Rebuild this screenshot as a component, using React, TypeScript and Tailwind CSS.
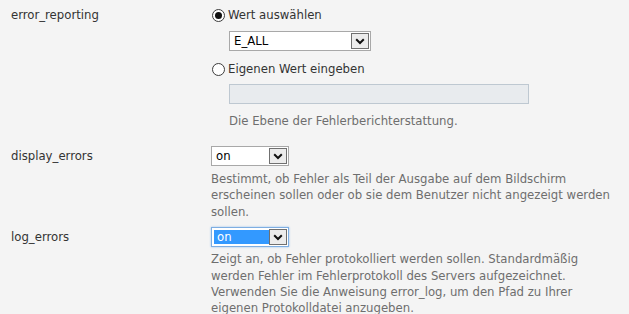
function Chevron() {
  return (
    <svg width="10" height="7" viewBox="0 0 10 7" className="block">
      <path d="M1.2 1.3 L5 5 L8.8 1.3" fill="none" stroke="#111" strokeWidth="2" />
    </svg>
  );
}

function FakeSelect({ value, width, focused }: { value: string; width: string; focused?: boolean }) {
  return (
    <div
      className={
        "flex h-[20px] items-stretch bg-white p-px " +
        width +
        (focused ? " border border-[#7eaee2] shadow-[0_0_2px_#9cc4ee]" : " border border-[#a8a8a8]")
      }
    >
      <div
        className={
          "flex flex-1 items-center pl-[3px] " + (focused ? "my-px ml-px bg-[#3399ff] text-white" : "text-black")
        }
      >
        {value}
      </div>
      <div className="flex w-[18px] items-center justify-center border border-[#707070] bg-[#ececec]">
        <Chevron />
      </div>
    </div>
  );
}

function Radio({ checked }: { checked?: boolean }) {
  return (
    <span className="flex h-[13px] w-[13px] items-center justify-center rounded-full border border-[#3c3c3c] bg-white">
      {checked && <span className="h-[7px] w-[7px] rounded-full bg-[#111]" />}
    </span>
  );
}

export default function App() {
  return (
    <div className="min-h-screen bg-[#f4f4f4] font-['DejaVu_Sans_Condensed','DejaVu_Sans',sans-serif] text-[13px] leading-[16px] text-[#333]">
      {/* error_reporting */}
      <div className="flex pt-[6px]">
        <div className="w-[211px] shrink-0 pl-[11px] leading-[18px]">error_reporting</div>
        <div className="flex flex-col">
          <label className="ml-px flex h-[18px] items-center gap-[3px]">
            <Radio checked />
            Wert auswählen
          </label>
          <div className="ml-[18px] mt-[7px]">
            <FakeSelect value="E_ALL" width="w-[142px]" />
          </div>
          <label className="ml-px mt-[9px] flex h-[18px] items-center gap-[3px]">
            <Radio />
            Eigenen Wert eingeben
          </label>
          <div className="ml-[18px] mt-[6px] h-[20px] w-[300px] border border-[#bec8d1] bg-[#e8ebee]" />
          <p className="ml-[18px] mt-[9px] whitespace-nowrap text-[#6e6e6e]">Die Ebene der Fehlerberichterstattung.</p>
        </div>
      </div>

      {/* display_errors */}
      <div className="mt-[17px] flex">
        <div className="flex h-[20px] w-[211px] shrink-0 items-center pl-[11px]">display_errors</div>
        <div className="flex flex-col">
          <FakeSelect value="on" width="w-[78px]" />
          <p className="mt-[5px] whitespace-nowrap leading-[16.4px] text-[#6e6e6e]">
            Bestimmt, ob Fehler als Teil der Ausgabe auf dem Bildschirm
            <br />
            erscheinen sollen oder ob sie dem Benutzer nicht angezeigt werden
            <br />
            sollen.
          </p>
        </div>
      </div>

      {/* log_errors */}
      <div className="mt-[7px] flex">
        <div className="flex h-[20px] w-[211px] shrink-0 items-center pl-[11px]">log_errors</div>
        <div className="flex flex-col">
          <FakeSelect value="on" width="w-[78px]" focused />
          <p className="mt-[4px] whitespace-nowrap leading-[16.4px] text-[#6e6e6e]">
            Zeigt an, ob Fehler protokolliert werden sollen. Standardmäßig
            <br />
            werden Fehler im Fehlerprotokoll des Servers aufgezeichnet.
            <br />
            Verwenden Sie die Anweisung error_log, um den Pfad zu Ihrer
            <br />
            eigenen Protokolldatei anzugeben.
          </p>
        </div>
      </div>
    </div>
  );
}
